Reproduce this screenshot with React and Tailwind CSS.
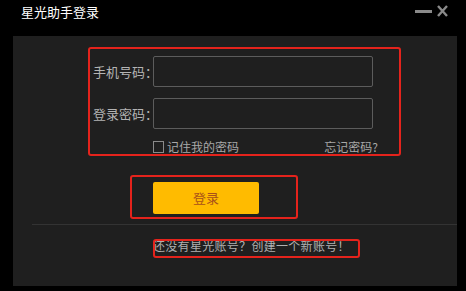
import React, { useState } from 'react';

export default function App() {
  const [phone, setPhone] = useState('');
  const [password, setPassword] = useState('');
  const [remember, setRemember] = useState(false);

  const font = { fontFamily: '"Noto Sans CJK SC", "Liberation Sans", sans-serif' };

  return (
    <div className="w-[466px] h-[291px] bg-black flex flex-col overflow-hidden" style={font}>
      {/* Title bar */}
      <div className="h-[36px] flex items-start justify-between pl-[21px] pr-[18px] pt-[2px]">
        <span className="text-white text-[13px] leading-[20px]">星光助手登录</span>
        <div className="flex items-center gap-[5px] pt-[3px]">
          <svg width="17" height="12" viewBox="0 0 17 12">
            <rect x="0" y="5" width="17" height="3" fill="#8a8a8a" />
          </svg>
          <svg width="11" height="12" viewBox="0 0 11 12">
            <path d="M1 1 L10 11 M10 1 L1 11" stroke="#8a8a8a" strokeWidth="2.4" />
          </svg>
        </div>
      </div>

      {/* Panel */}
      <div className="flex-1 ml-[13px] mr-[9px] mb-[5px] bg-[#1f1f1f] flex flex-col">
        {/* Form box */}
        <div className="ml-[75px] mt-[11px] w-[313px] h-[109px] border-2 border-[#e4231c] rounded-[3px] pt-[7px] flex flex-col">
          <div className="flex items-center">
            <label className="w-[63px] pl-[3px] text-[13px] text-[#b4b4b4] whitespace-nowrap">手机号码：</label>
            <input
              value={phone}
              onChange={(e) => setPhone(e.target.value)}
              className="w-[220px] h-[31px] bg-transparent border border-[#5c5c5c] rounded-[2px] px-2 text-[13px] text-white outline-none"
            />
          </div>
          <div className="flex items-center mt-[11px]">
            <label className="w-[63px] pl-[3px] text-[13px] text-[#b4b4b4] whitespace-nowrap">登录密码：</label>
            <input
              type="password"
              value={password}
              onChange={(e) => setPassword(e.target.value)}
              className="w-[220px] h-[31px] bg-transparent border border-[#5c5c5c] rounded-[2px] px-2 text-[13px] text-white outline-none"
            />
          </div>
          <div className="flex items-center mt-[10px] pl-[63px] pr-[21px] h-[16px]">
            <button
              onClick={() => setRemember(!remember)}
              className="w-[11px] h-[12px] border border-[#8a8a8a] bg-transparent flex items-center justify-center text-[9px] text-white leading-none"
            >
              {remember ? '✓' : ''}
            </button>
            <span className="ml-[3px] text-[12px] text-[#a8a8a8] leading-[16px]">记住我的密码</span>
            <span className="ml-auto text-[12px] text-[#a8a8a8] leading-[16px]">忘记密码?</span>
          </div>
        </div>

        {/* Login button box */}
        <div className="ml-[117px] mt-[19px] w-[168px] h-[44px] border-2 border-[#e4231c] rounded-[3px] pl-[21px] pt-[5px]">
          <button className="w-[106px] h-[32px] bg-[#ffbb00] rounded-[2px] text-[13px] text-[#a8501a]">
            登录
          </button>
        </div>

        {/* Separator */}
        <div className="ml-[19px] mt-[5px] h-px bg-[#333333]" />

        {/* Register link */}
        <div className="relative ml-[140px] mt-[7px] h-[26px]">
          <span className="text-[12px] text-[#b0b0b0] leading-[16px] whitespace-nowrap tracking-[0.3px]">还没有星光账号？创建一个新账号！</span>
          <div className="absolute left-0 top-[7px] w-[207px] h-[19px] border-2 border-[#e4231c] rounded-[3px]" />
        </div>
      </div>
    </div>
  );
}
